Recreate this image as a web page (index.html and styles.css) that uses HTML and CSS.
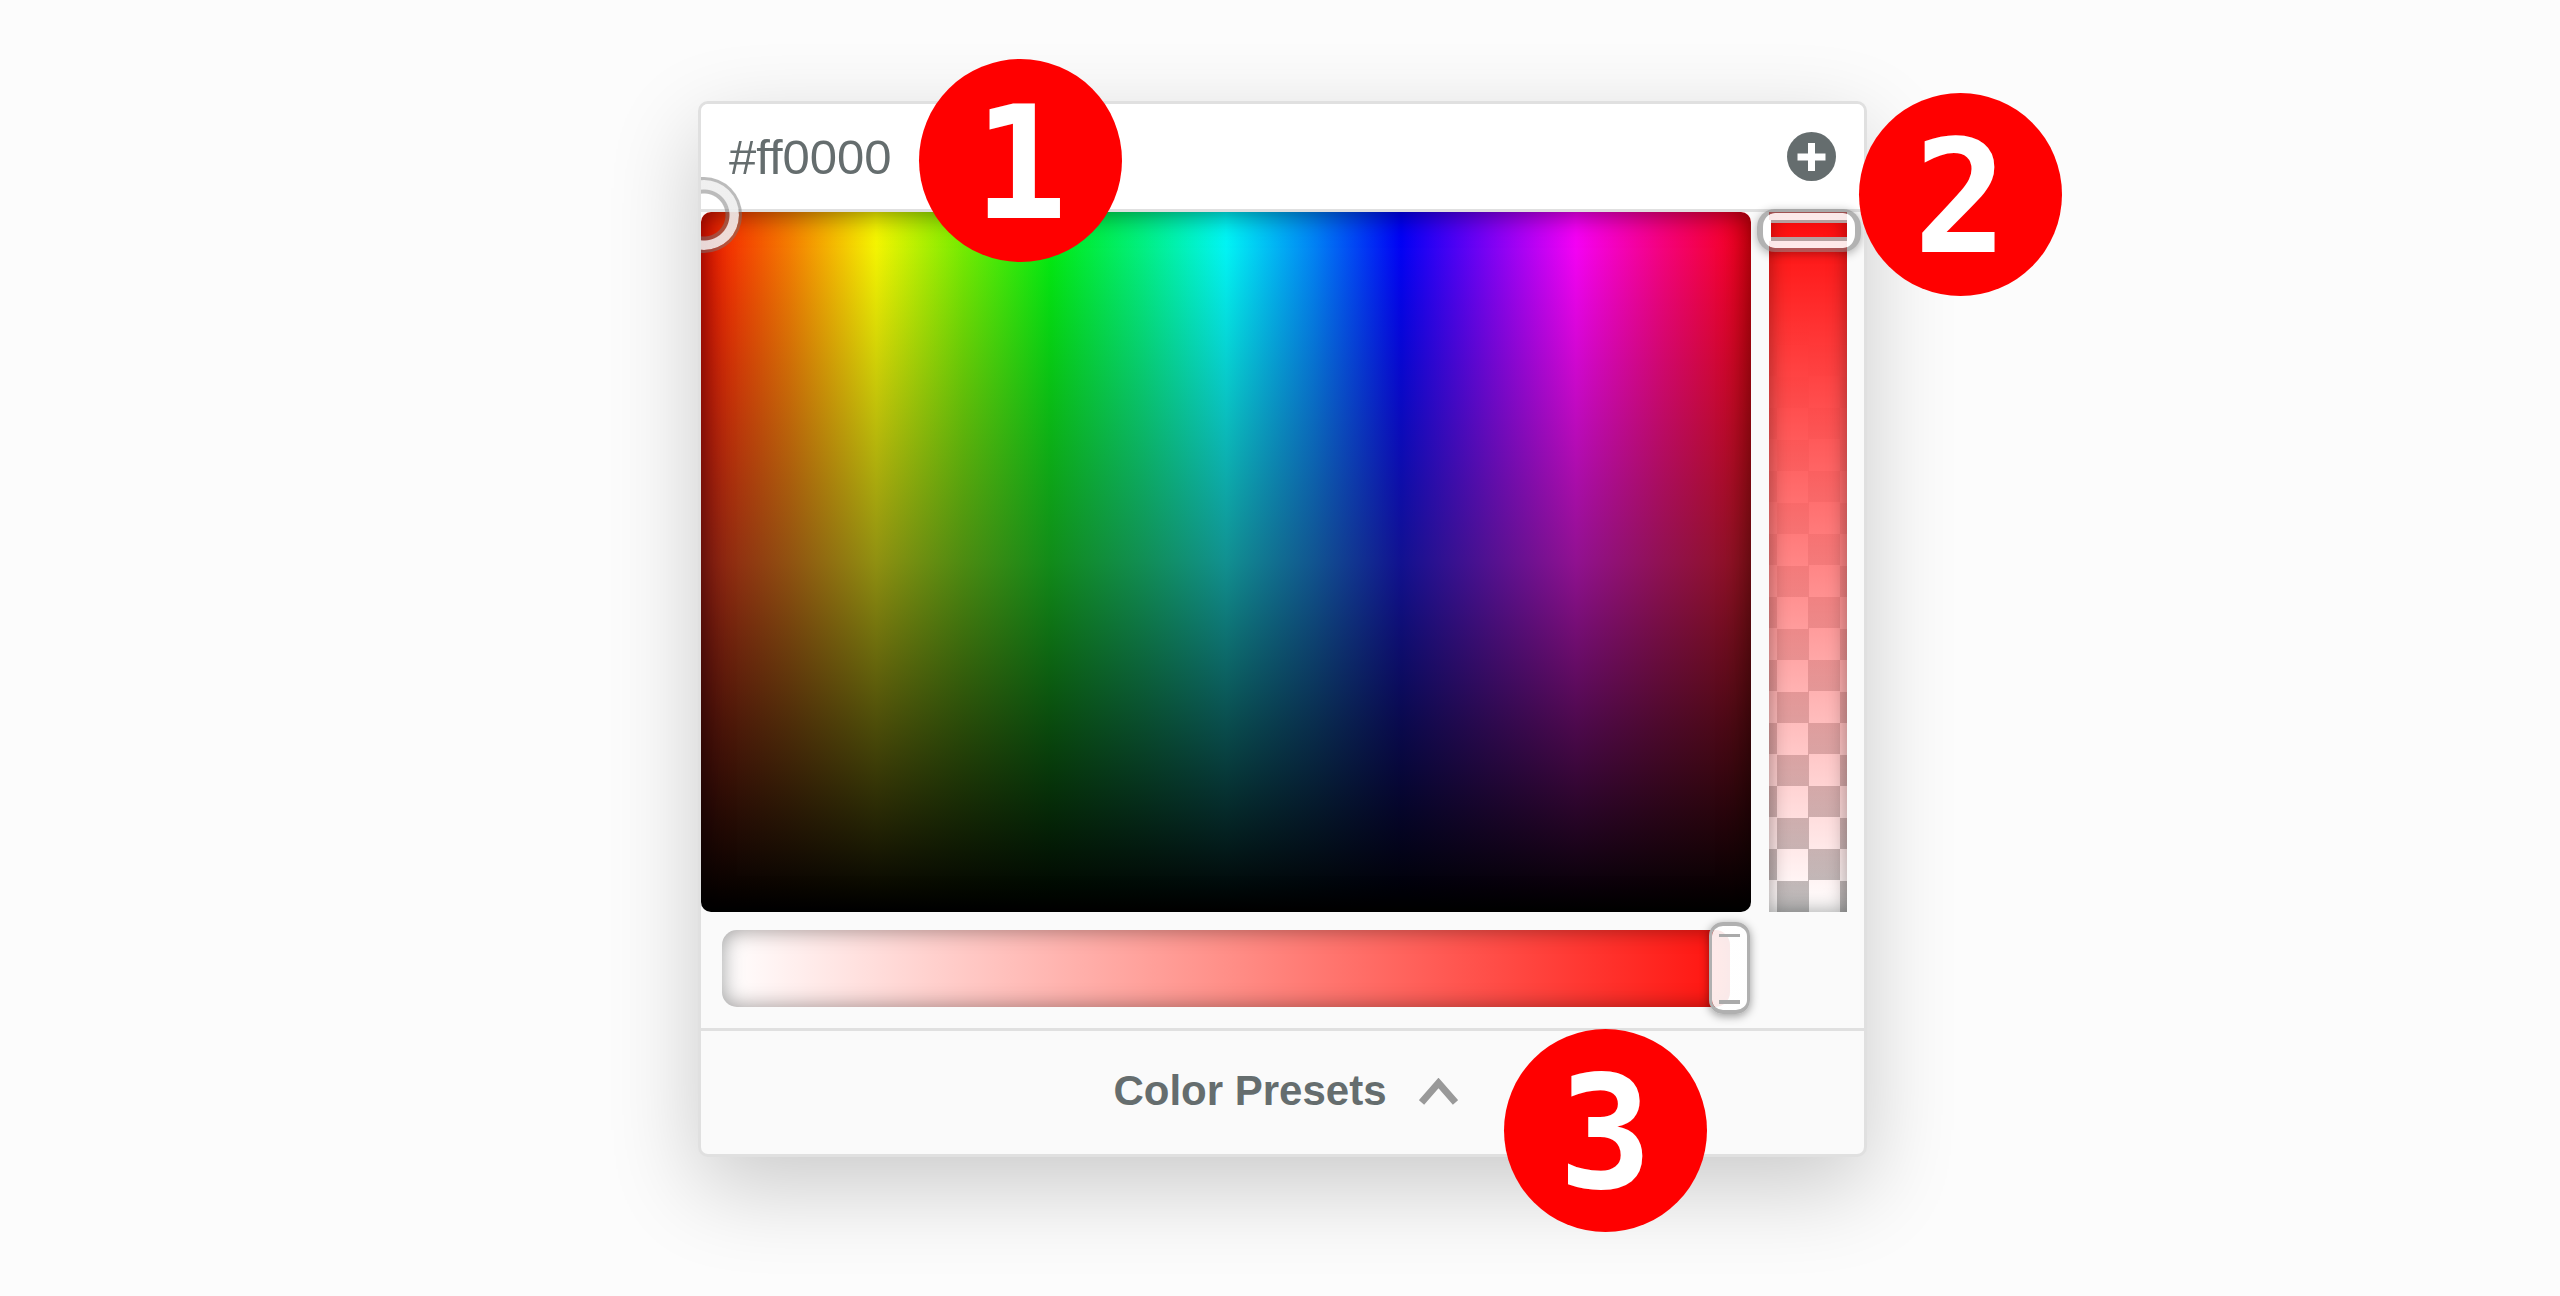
FILE: index.html
```html
<!DOCTYPE html>
<html lang="en">
<head>
<meta charset="utf-8">
<meta name="viewport" content="width=device-width, initial-scale=1">
<title>Color picker</title>
<link rel="stylesheet" href="styles.css">
</head>
<body>
<main class="stage">
  <div class="picker-wrap">
    <section class="picker" aria-label="Color picker">
      <header class="picker-header">
        <input class="hex" type="text" value="#ff0000" aria-label="Color value" spellcheck="false">
        <button class="add" type="button" aria-label="Add to presets">
          <svg viewBox="0 0 49 49" aria-hidden="true"><circle cx="24.5" cy="24.5" r="24.5" fill="#656d6e"/><path d="M21 11h7v10.500h10.500v7H28V39h-7V28.500H10.500v-7H21z" fill="#fff"/></svg>
        </button>
      </header>
      <div class="controls">
        <div class="spectrum">
          <button class="ring" type="button" aria-label="Hue and brightness"></button>
        </div>
        <div class="alpha">
          <input class="alpha-range" type="range" min="0" max="100" value="100" aria-label="Opacity">
        </div>
        <div class="saturation">
          <input class="saturation-range" type="range" min="0" max="100" value="100" aria-label="Saturation">
        </div>
      </div>
      <button class="presets" type="button">
        <span>Color Presets</span>
        <svg class="chevron" viewBox="0 0 39 27" aria-hidden="true"><path d="M2.500 24.500 19.500 5 36.500 24.500" fill="none" stroke="#999" stroke-width="7"/></svg>
      </button>
    </section>
    <span class="badge badge-value">1</span>
    <span class="badge badge-add">2</span>
    <span class="badge badge-presets">3</span>
  </div>
</main>
</body>
</html>
```
FILE: styles.css
```css
* {
  box-sizing: border-box;
}

body {
  margin: 0;
  background: #fcfcfc;
  color: #656d6e;
  font-family: "Liberation Sans", Arial, sans-serif;
}

button,
input {
  margin: 0;
  padding: 0;
  border: 0;
  background: none;
  color: inherit;
  font: inherit;
}

.stage {
  padding: 101px 40px 139px 45px;
}

.picker-wrap {
  position: relative;
  max-width: 1169px;
  margin: 0 auto;
}

.picker {
  overflow: hidden;
  border: 3px solid #e0e0e0;
  border-radius: 10px;
  background: #fafafa;
  box-shadow: 0 30px 90px rgba(0, 0, 0, 0.2);
}

.picker-header {
  display: flex;
  align-items: center;
  justify-content: space-between;
  height: 108px;
  padding: 0 28px;
  border-bottom: 3px solid #e0e0e0;
  background: #fff;
}

.hex {
  flex: 1;
  min-width: 0;
  font-size: 49px;
  line-height: 56px;
}

.add,
.add svg {
  display: block;
  width: 49px;
  height: 49px;
}

.controls {
  display: grid;
  grid-template-columns: 1fr 78px;
  gap: 18px;
  padding: 0 17px 21px 0;
  border-bottom: 3px solid #e0e0e0;
}

.spectrum {
  position: relative;
  aspect-ratio: 3 / 2;
  border-radius: 10px;
  background:
    linear-gradient(to bottom, transparent, rgba(34, 34, 34, 0.5) 50%, #000),
    linear-gradient(to right, #f10 0%, #ff8000 8.33%, #ff0 16.67%, #78f500 25%, #00f510 33.33%, #00fa85 42%, #0ff 50%, #0088ff 58.33%, #00f 66.67%, #8000ff 75%, #f0f 83.33%, #ff0080 91.67%, #ff0010 100%);
  box-shadow: inset 0 0 30px rgba(0, 0, 0, 0.6);
}

.ring {
  position: absolute;
  top: -35px;
  left: -35px;
  width: 76px;
  height: 76px;
  border: 3px solid rgba(120, 120, 120, 0.5);
  border-radius: 50%;
  background: radial-gradient(circle, transparent 21px, rgba(120, 120, 120, 0.5) 22px 25px, rgba(238, 238, 238, 0.9) 26px) padding-box;
}

.alpha {
  position: relative;
  background:
    linear-gradient(to bottom, #ff0a0a, rgba(255, 10, 10, 0)),
    linear-gradient(to bottom, #fff 15%, rgba(255, 255, 255, 0.75) 45%, rgba(255, 255, 255, 0.4) 70%, rgba(255, 255, 255, 0)),
    conic-gradient(#bbb 25%, #fff 0 50%, #bbb 0 75%, #fff 0) 8px 100% / 63px 63px;
  box-shadow: inset 0 0 20px rgba(0, 0, 0, 0.4);
}

.alpha-range,
.saturation-range {
  position: absolute;
  appearance: none;
}

.alpha-range {
  top: -3px;
  left: -12px;
  width: 104px;
  height: calc(100% + 6px);
  writing-mode: vertical-lr;
  direction: rtl;
}

.alpha-range::-webkit-slider-thumb {
  appearance: none;
  width: 104px;
  height: 43px;
  border: solid rgba(130, 130, 130, 0.6);
  border-width: 4px 6px;
  border-radius: 18px;
  background:
    linear-gradient(#b5a09f, #b5a09f) 50% 7px / 76px 3px,
    linear-gradient(#b5a09f, #b5a09f) 50% 24px / 76px 4px,
    linear-gradient(#ffffffe8, #ffffffe8) 0 0 / 100% 7px,
    linear-gradient(#ffffffe8, #ffffffe8) 0 100% / 100% 7px,
    linear-gradient(#fff, #fff) 0 7px / 8px 21px,
    linear-gradient(#fff, #fff) 100% 7px / 8px 21px;
  background-repeat: no-repeat;
  background-origin: padding-box;
  background-clip: padding-box;
  box-shadow: 0 2px 10px rgba(0, 0, 0, 0.3);
}

.saturation {
  position: relative;
  height: 77px;
  margin: 0 21px;
  border-radius: 15px;
  background: linear-gradient(to right, #fff, #ff8f88 50%, #ff130e);
  box-shadow: inset 0 0 21px rgba(0, 0, 0, 0.4);
}

.saturation-range {
  top: -8px;
  left: -20px;
  width: calc(100% + 40px);
  height: 92px;
}

.saturation-range::-webkit-slider-thumb {
  appearance: none;
  width: 41px;
  height: 92px;
  border: solid #b0b0b0;
  border-width: 4px 3px;
  border-radius: 14px;
  background:
    linear-gradient(#aaa, #aaa) 50% 8px / 21px 3px no-repeat padding-box,
    linear-gradient(#aaa, #aaa) 50% 74px / 21px 4px no-repeat padding-box,
    linear-gradient(#ffffffe8, #ffffffe8) padding-box;
  box-shadow: 0 2px 10px rgba(0, 0, 0, 0.4);
}

.presets {
  display: flex;
  align-items: center;
  justify-content: center;
  gap: 32px;
  width: 100%;
  height: 123px;
  padding: 0 0 3px 6px;
  font-size: 42px;
  font-weight: 700;
  line-height: 48px;
}

.chevron {
  width: 39px;
  height: 27px;
}

.badge {
  position: absolute;
  display: grid;
  place-items: center;
  width: 203px;
  height: 203px;
  padding-top: 8px;
  border-radius: 50%;
  background: #f00;
  color: #fff;
  font: 700 156px/195px "DejaVu Sans Mono", monospace;
}

.badge-value {
  top: -42px;
  left: 221px;
}

.badge-add {
  top: -8px;
  right: -195px;
}

.badge-presets {
  right: 160px;
  bottom: -75px;
}
```
